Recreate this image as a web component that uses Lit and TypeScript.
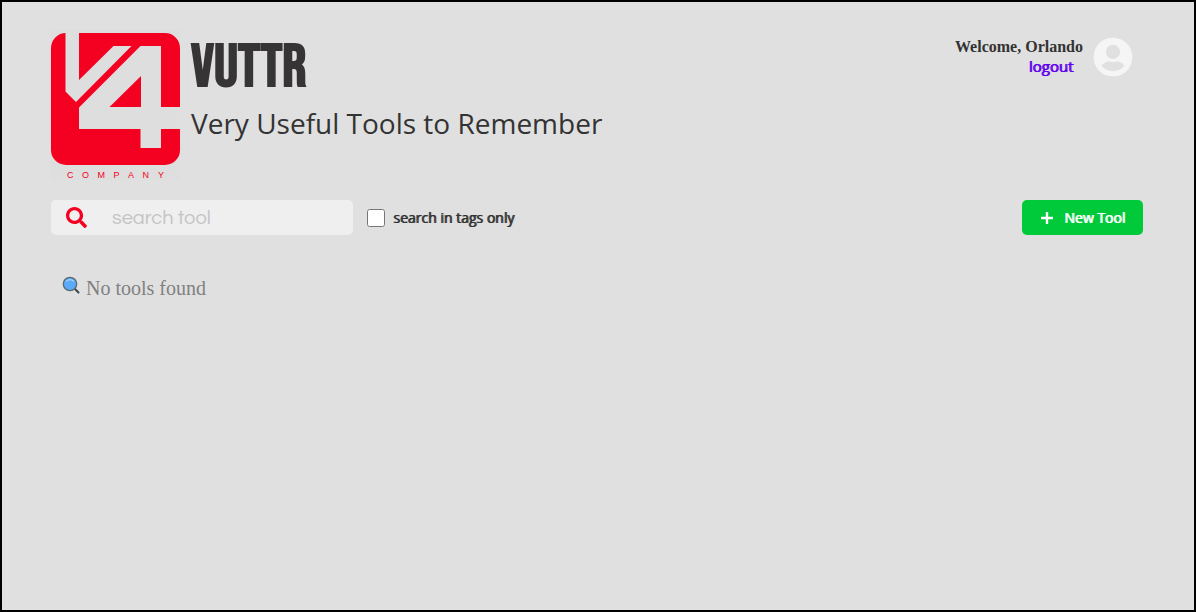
import { LitElement, html, css } from "lit";
import { customElement, property, state } from "lit/decorators.js";

@customElement("company-logo")
class CompanyLogo extends LitElement {
  static styles = css`
    :host {
      display: block;
      flex: none;
    }
    .logo {
      display: block;
      width: 130px;
      height: 150px;
    }
    .word {
      font-family: "Liberation Sans", Arial, sans-serif;
      font-size: 9px;
      fill: #f40020;
    }
  `;

  render() {
    return html`
      <svg class="logo" viewBox="0 0 130 150" role="img" aria-label="V4 Company">
        <rect width="130" height="150" fill="#dedede" />
        <rect y="3" x="1" width="129" height="132" rx="15" fill="#f40020" />
        <path
          fill="#dedede"
          d="M15.500 2H29V50L63.500 16H81.500L26 72L15.500 61.500ZM90.500 16H111V77H130V99H111V118H90.500V99H29V77.500ZM91 46L59.500 77H91Z"
          fill-rule="evenodd"
        />
        <text class="word" y="148" x="17 32 47.500 63.500 78 92.500 108">COMPANY</text>
      </svg>
    `;
  }
}

@customElement("user-menu")
class UserMenu extends LitElement {
  static styles = css`
    :host {
      display: flex;
      gap: 10px;
    }
    .text {
      text-align: right;
      font: bold 16px/20px "Liberation Serif", "Times New Roman", serif;
      color: #333;
    }
    .name {
      display: block;
    }
    .logout {
      display: block;
      margin-right: 10px;
      font: 400 15px/18px "Open Sans", sans-serif;
      text-shadow: 1px 0 #6200ee;
      color: #6200ee;
      text-decoration: none;
    }
    .avatar {
      width: 40px;
      height: 40px;
      fill: #f5f5f5;
    }
  `;

  @property() name = "";

  render() {
    return html`
      <div class="text">
        <span class="name">Welcome, ${this.name}</span>
        <a class="logout" href="#logout">logout</a>
      </div>
      <svg class="avatar" viewBox="0 0 496 496" aria-hidden="true">
        <path
          d="M248 8C111 8 8 111 8 248s103 240 240 240 240-103 240-240S385 8 248 8zm0 88c48.600 0 88 39.400 88 88s-39.400 88-88 88-88-39.400-88-88 39.400-88 88-88zm0 330c-58 0-110-25-142-68 20-34 56-54 90-54 10 0 22 8 52 8s42-8 52-8c34 0 70 20 90 54-32 43-84 68-142 68z"
        />
      </svg>
    `;
  }
}

@customElement("app-root")
class AppRoot extends LitElement {
  static styles = css`
    :host {
      display: block;
      box-sizing: border-box;
      min-height: 100vh;
      padding: 28px 51px 28px 48px;
      border: 2px solid #000;
      background: #e0e0e0;
      color: #333;
    }
    .header {
      display: flex;
      gap: 11px;
    }
    .titles {
      flex: 1;
      padding-top: 8px;
    }
    .title {
      margin: 0;
      font: bold 60px/60px "Bebas Neue", Anton, "Liberation Sans", sans-serif;
      color: #373435;
    }
    .subtitle {
      margin: 5px 0 0;
      font: 400 28px/40px "Open Sans", sans-serif;
    }
    .user {
      margin: 7px 10px 0 0;
    }
    .toolbar {
      display: flex;
      align-items: center;
      margin: 20px 0 0 1px;
      font: 400 14px/20px "Open Sans", sans-serif;
    }
    .search {
      display: flex;
      align-items: center;
      box-sizing: border-box;
      width: 302px;
      height: 35px;
      padding: 0 15px;
      gap: 25px;
      border-radius: 5px;
      background: #efefef;
    }
    .search-icon {
      flex: none;
      width: 21px;
      height: 21px;
      fill: #f40020;
    }
    .search-input {
      flex: 1;
      min-width: 0;
      padding: 0;
      border: 0;
      outline: 0;
      background: none;
      color: #333;
      font: 20px/24px Questrial, "Liberation Sans", sans-serif;
    }
    .search-input::placeholder {
      color: #c4c4c4;
    }
    .tags-only {
      display: flex;
      align-items: center;
      gap: 8px;
      margin-left: 14px;
      text-shadow: 1px 0 #333;
    }
    .check {
      width: 18px;
      height: 18px;
      margin: 0;
    }
    .new-tool {
      display: flex;
      align-items: center;
      gap: 11px;
      height: 35px;
      margin-left: auto;
      padding: 0 18px 0 19px;
      border: 0;
      border-radius: 5px;
      background: #00ca39;
      color: #fff;
      font: inherit;
      text-shadow: 1px 0 #fff;
    }
    .plus {
      width: 12px;
      height: 12px;
      stroke: #fff;
      stroke-width: 2.400;
    }
    .empty {
      display: flex;
      gap: 6px;
      margin: 41px 0 0 12px;
      font: 20px/24px "Liberation Serif", "Times New Roman", serif;
      color: gray;
    }
    .lens {
      width: 18px;
      height: 18px;
    }
  `;

  @state() private query = "";
  @state() private tagsOnly = false;

  render() {
    return html`
      <header class="header">
        <company-logo></company-logo>
        <div class="titles">
          <h1 class="title">VUTTR</h1>
          <p class="subtitle">Very Useful Tools to Remember</p>
        </div>
        <user-menu class="user" name="Orlando"></user-menu>
      </header>
      <div class="toolbar">
        <label class="search">
          <svg class="search-icon" viewBox="0 0 512 512" aria-hidden="true">
            <path
              d="M505 442.700L405.300 343c-4.500-4.500-10.600-7-17-7H372c27.600-35.300 44-79.700 44-128C416 93.100 322.900 0 208 0S0 93.100 0 208s93.100 208 208 208c48.300 0 92.700-16.400 128-44v16.300c0 6.400 2.500 12.500 7 17l99.700 99.700c9.400 9.400 24.600 9.400 33.900 0l28.300-28.300c9.400-9.400 9.400-24.600.1-34zM208 336c-70.700 0-128-57.200-128-128 0-70.700 57.200-128 128-128 70.700 0 128 57.200 128 128 0 70.700-57.200 128-128 128z"
            />
          </svg>
          <input
            class="search-input"
            type="text"
            placeholder="search tool"
            aria-label="search tool"
            .value=${this.query}
            @input=${(e: Event) => (this.query = (e.target as HTMLInputElement).value)}
          />
        </label>
        <label class="tags-only">
          <input
            class="check"
            type="checkbox"
            .checked=${this.tagsOnly}
            @change=${(e: Event) => (this.tagsOnly = (e.target as HTMLInputElement).checked)}
          />
          search in tags only
        </label>
        <button class="new-tool" type="button">
          <svg class="plus" viewBox="0 0 12 12" aria-hidden="true"><path d="M6 0V12M0 6H12" /></svg>
          New Tool
        </button>
      </div>
      <p class="empty">
        <svg class="lens" viewBox="0 0 18 18" aria-hidden="true">
          <path d="M12 12L16.500 16.500" stroke="#37474f" stroke-width="2" stroke-linecap="round" />
          <circle cx="8" cy="8" r="6.700" fill="#5aa9fa" stroke="#5c6a70" stroke-width="1.300" />
          <path d="M4.500 5Q8 2.300 11.500 5" fill="none" stroke="#a9d5ff" stroke-width="1.300" stroke-linecap="round" />
        </svg>
        No tools found
      </p>
    `;
  }
}
